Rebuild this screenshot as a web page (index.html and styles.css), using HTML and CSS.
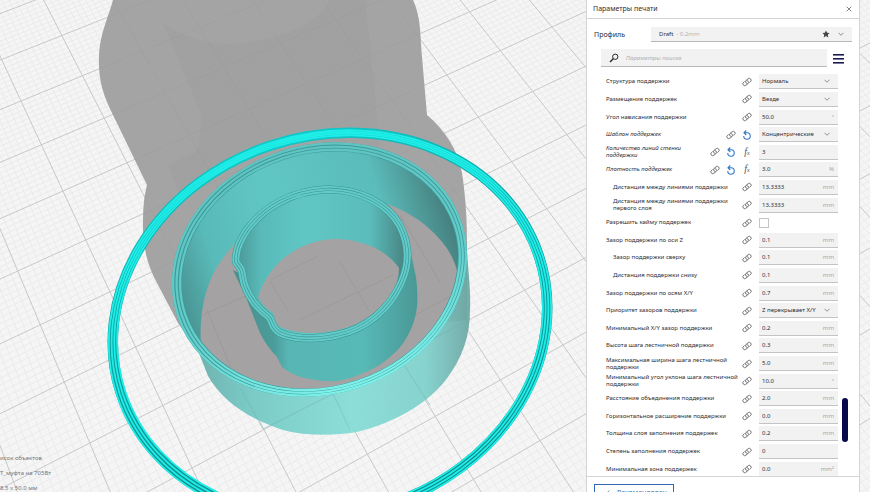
FILE: index.html
```html
<!DOCTYPE html>
<html lang="ru">
<head>
<meta charset="utf-8">
<meta name="viewport" content="width=device-width, initial-scale=1">
<title>Параметры печати</title>
<link rel="stylesheet" href="styles.css">
</head>
<body>
<svg class="sprites" aria-hidden="true">
  <symbol id="link" viewBox="0 0 20 20"><g fill="none" stroke="currentColor" stroke-width="1.6" stroke-linecap="round" transform="rotate(-38 10 10)"><path d="M8.2 12.200A3.500 3.500 0 0 1 10.500 6.300H15.800A3.700 3.700 0 0 1 15.800 13.700H14"/><path d="M11.800 7.800A3.500 3.500 0 0 1 9.500 13.700H4.200A3.700 3.700 0 0 1 4.200 6.300H6"/></g></symbol>
  <symbol id="reset" viewBox="0 0 20 20"><path d="M3.500 12A6.500 6.500 0 1 0 10 5.500H4.500M8.500 1L4 5.500L8.500 10" fill="none" stroke="currentColor" stroke-width="2.200"/></symbol>
  <symbol id="chevron" viewBox="0 0 12 8"><path d="M1 1.5L6 6.5L11 1.5" fill="none" stroke="currentColor" stroke-width="1.6"/></symbol>
</svg>

<main class="viewer">
  <svg class="scene" viewBox="0 0 870 492" preserveAspectRatio="xMinYMin slice" aria-hidden="true">
    <defs>
      <linearGradient id="wallIn" x1="0" x2="1"><stop offset="0" stop-color="#4a9695"/><stop offset=".15" stop-color="#59bbb9"/><stop offset=".4" stop-color="#60c6c4"/><stop offset=".78" stop-color="#5bbdbb"/><stop offset="1" stop-color="#46807f"/></linearGradient>
      <linearGradient id="wallOut" x1="0" x2="1"><stop offset="0" stop-color="#5f9f9d"/><stop offset=".25" stop-color="#70c6c2"/><stop offset=".6" stop-color="#84dcd6"/><stop offset=".85" stop-color="#7ed0cb"/><stop offset="1" stop-color="#6aa5a2"/></linearGradient>
      <linearGradient id="coreOut" x1="0" x2="1"><stop offset="0" stop-color="#4d8e8d"/><stop offset=".22" stop-color="#4a9c9a"/><stop offset=".3" stop-color="#58b6b3"/><stop offset=".7" stop-color="#57bab7"/><stop offset="1" stop-color="#4a9896"/></linearGradient>
      <linearGradient id="brimDark" x1="0" y1="0" x2="0" y2="1"><stop offset="0" stop-color="#10c8c8"/><stop offset=".3" stop-color="#0fa0a0"/><stop offset="1" stop-color="#128a8a"/></linearGradient>
      <linearGradient id="rimLight" x1="0" y1="0" x2="0" y2="1"><stop offset="0" stop-color="#5fc4c2"/><stop offset=".6" stop-color="#62cdca"/><stop offset="1" stop-color="#7df0ea"/></linearGradient>
      <clipPath id="bore"><ellipse cx="320" cy="270" rx="140" ry="116" transform="rotate(-18 320 270)"/></clipPath>
      <path id="coreRim" d="M236 262C235 250 240 240 247 230C264 207 292 191 325 189.500C360 188 389 205 400 226C411 248 408 268 401 283C390 308 367 329 337 335C314 340 293 339 280 333C271 328 273 322 269 317C258 309 249 297 245 286C242 277 243 274 241 269Z"/>
    </defs>
    <g id="grid-minor" class="grid-minor"></g>
    <g id="grid-major" class="grid-major"></g>

    <path fill="#9b9b9b" fill-opacity=".9" d="M113 0C108 18 100 34 99 55C98 80 103 95 113 115L147 185C143 200 143 214 143 230C144 252 148 266 157 283L178 323L197 350L300 340L467 320V246C467 220 466 200 462 173C458 150 445 130 427 115L422 57C420 32 421 18 413 0Z"/>
    <path fill="#8c8c8c" fill-opacity=".12" d="M163 23Q215 60 290 32Q325 15 330 0H365L373 75L380 150Q250 120 180 195L168 165L198 150L202 117L190 87Z"/>

    <g fill="none">
      <ellipse cx="330" cy="325" rx="220" ry="189" stroke="url(#brimDark)" stroke-width="10.500" transform="rotate(-18 330 325)"/>
      <g stroke="#1feee8" stroke-width="1.8">
        <ellipse cx="330" cy="326" rx="224" ry="192.500" transform="rotate(-18 330 326)"/>
        <ellipse cx="330" cy="325.400" rx="221.200" ry="190.200" transform="rotate(-18 330 325.400)"/>
        <ellipse cx="330" cy="324.700" rx="218.400" ry="187.900" transform="rotate(-18 330 324.700)"/>
        <ellipse cx="330" cy="324" rx="215.600" ry="185.600" transform="rotate(-18 330 324)"/>
      </g>
    </g>

    <path fill="url(#wallOut)" fill-opacity=".92" d="M173 290L197 348L208 376C222 400 246 418 283 430C306 436 334 436 357 432C396 422 425 405 445 381C463 358 470 335 470 310C471 290 468 270 467 250L320 380Z"/>
    <g fill="none" stroke="#6fb3b0" stroke-width=".8" opacity=".6"><path d="M240 388L263 429M333 394L350 430M404 365L430 405M263 429L333 394M425 343L470 319"/></g>
    <ellipse cx="319.5" cy="269.5" rx="149.8" ry="124.5" fill="#3d9a99" transform="rotate(-18 319.5 269.5)"/>
    <ellipse cx="320" cy="270" rx="140" ry="116" fill="url(#wallIn)" transform="rotate(-18 320 270)"/>
    <g clip-path="url(#bore)">
      <path fill="#a4a2a2" d="M201 345C199 318 204 288 217 267C240 228 290 200 340 198C385 196 420 215 443 243C455 258 460 275 462 300V420H201Z"/>
      <g stroke="#999797" stroke-width=".8"><path d="M203 315L250 294M400 215L440 282M207 310L232 370M410 318L462 290"/></g>
    </g>
    <g fill="none" stroke="url(#rimLight)" stroke-width="2.300">
      <ellipse cx="319.5" cy="269.5" rx="148.6" ry="123.5" transform="rotate(-18 319.5 269.5)"/>
      <ellipse cx="319.7" cy="269.7" rx="145.3" ry="120.6" transform="rotate(-18 319.7 269.7)"/>
      <ellipse cx="320" cy="270" rx="142" ry="117.7" transform="rotate(-18 320 270)"/>
    </g>

    <path fill="url(#coreOut)" d="M233 270L247 300L260 333Q267 347 277 357L282 367Q295 377 310 379Q325 382 337 381Q351 379 363 373Q379 367 390 357Q401 348 407 337Q415 323 417 307Q418 292 416 277L409 245L330 320Z"/>
    <use href="#coreRim" fill="url(#wallIn)"/>
    <path fill="#a4a2a2" d="M258 297Q262 284 270 273C285 252 310 239 337 239C366 240 388 252 399 268Q399 282 391 295C375 320 345 332 315 333Q290 333 277 325L273 313Q263 307 258 297Z"/>
    <g stroke="#9a9898" stroke-width=".8"><path d="M270 281L288 311M340 262L369 311M270 280L318 256M300 320L393 275"/></g>
    <g fill="none" stroke-linejoin="round">
      <use href="#coreRim" stroke="#3d9594" stroke-width="8"/>
      <use href="#coreRim" stroke="#62cbc8" stroke-width="7"/>
      <use href="#coreRim" stroke="#3d9594" stroke-width="3.200"/>
      <use href="#coreRim" stroke="#62cbc8" stroke-width="2"/>
    </g>
  </svg>

  <section class="object-info" aria-label="Объекты">
    <p>исок объектов</p>
    <p>T_муфта на 705Вт</p>
    <p>8.5 x 50.0 мм</p>
  </section>

  <aside class="panel">
    <header class="panel-head">
      <h1>Параметры печати</h1>
      <button class="close" type="button" aria-label="Закрыть"><svg viewBox="0 0 8 8"><path d="M1 1L7 7M7 1L1 7" stroke="currentColor" stroke-width="1.2"/></svg></button>
    </header>

    <div class="profile">
      <span class="profile-name">Профиль</span>
      <button class="profile-pick" type="button"><span>Draft</span><span class="muted">- 0.2mm</span><svg class="star" viewBox="0 0 20 20"><path fill="currentColor" d="M10 1L12.800 7L19 7.700L14.400 12L15.700 18.500L10 15.200L4.300 18.500L5.600 12L1 7.700L7.200 7Z"/></svg><svg class="chev"><use href="#chevron"/></svg></button>
    </div>

    <div class="search">
      <label class="search-box"><svg viewBox="0 0 20 20"><circle cx="12.500" cy="7.500" r="5.300" fill="none" stroke="currentColor" stroke-width="2"/><path d="M8.500 11.500L2 18" stroke="currentColor" stroke-width="3"/></svg><input type="text" placeholder="Параметры поиска" aria-label="Параметры поиска"></label>
      <button class="menu" type="button" aria-label="Меню"><span></span><span></span><span></span></button>
    </div>

    <div class="body">
      <div class="rows">
        <div class="row"><label for="s1">Структура поддержки</label><svg class="ico"><use href="#link"/></svg><div class="field"><select id="s1"><option>Нормаль</option></select><svg class="chev"><use href="#chevron"/></svg></div></div>
        <div class="row"><label for="s2">Размещение поддержек</label><svg class="ico"><use href="#link"/></svg><div class="field"><select id="s2"><option>Везде</option></select><svg class="chev"><use href="#chevron"/></svg></div></div>
        <div class="row"><label for="s3">Угол нависания поддержки</label><svg class="ico"><use href="#link"/></svg><div class="field"><input id="s3" type="text" value="50.0"><span>°</span></div></div>
        <div class="row changed"><label for="s4">Шаблон поддержек</label><svg class="ico"><use href="#link"/></svg><svg class="ico blue"><use href="#reset"/></svg><div class="field"><select id="s4"><option>Концентрические</option></select><svg class="chev"><use href="#chevron"/></svg></div></div>
        <div class="row changed"><label for="s5">Количество линий стенки поддержки</label><svg class="ico"><use href="#link"/></svg><svg class="ico blue"><use href="#reset"/></svg><span class="fx">f<small>x</small></span><div class="field"><input id="s5" type="text" value="3"></div></div>
        <div class="row changed"><label for="s6">Плотность поддержек</label><svg class="ico"><use href="#link"/></svg><svg class="ico blue"><use href="#reset"/></svg><span class="fx">f<small>x</small></span><div class="field"><input id="s6" type="text" value="3.0"><span>%</span></div></div>
        <div class="row child"><label for="s7">Дистанция между линиями поддержки</label><svg class="ico"><use href="#link"/></svg><div class="field"><input id="s7" type="text" value="13.3333"><span>mm</span></div></div>
        <div class="row child"><label for="s8">Дистанция между линиями поддержки первого слоя</label><svg class="ico"><use href="#link"/></svg><div class="field"><input id="s8" type="text" value="13.3333"><span>mm</span></div></div>
        <div class="row"><label for="s9">Разрешить кайму поддержек</label><svg class="ico"><use href="#link"/></svg><div class="check"><input id="s9" type="checkbox"></div></div>
        <div class="row"><label for="s10">Зазор поддержки по оси Z</label><svg class="ico"><use href="#link"/></svg><div class="field"><input id="s10" type="text" value="0.1"><span>mm</span></div></div>
        <div class="row child"><label for="s11">Зазор поддержки сверху</label><svg class="ico"><use href="#link"/></svg><div class="field"><input id="s11" type="text" value="0.1"><span>mm</span></div></div>
        <div class="row child"><label for="s12">Дистанция поддержки снизу</label><svg class="ico"><use href="#link"/></svg><div class="field"><input id="s12" type="text" value="0.1"><span>mm</span></div></div>
        <div class="row"><label for="s13">Зазор поддержки по осям X/Y</label><svg class="ico"><use href="#link"/></svg><div class="field"><input id="s13" type="text" value="0.7"><span>mm</span></div></div>
        <div class="row"><label for="s14">Приоритет зазоров поддержки</label><svg class="ico"><use href="#link"/></svg><div class="field"><select id="s14"><option>Z перекрывает X/Y</option></select><svg class="chev"><use href="#chevron"/></svg></div></div>
        <div class="row"><label for="s15">Минимальный X/Y зазор поддержки</label><svg class="ico"><use href="#link"/></svg><div class="field"><input id="s15" type="text" value="0.2"><span>mm</span></div></div>
        <div class="row"><label for="s16">Высота шага лестничной поддержки</label><svg class="ico"><use href="#link"/></svg><div class="field"><input id="s16" type="text" value="0.3"><span>mm</span></div></div>
        <div class="row"><label for="s17">Максимальная ширина шага лестничной поддержки</label><svg class="ico"><use href="#link"/></svg><div class="field"><input id="s17" type="text" value="5.0"><span>mm</span></div></div>
        <div class="row"><label for="s18">Минимальный угол уклона шага лестничной поддержки</label><svg class="ico"><use href="#link"/></svg><div class="field"><input id="s18" type="text" value="10.0"><span>°</span></div></div>
        <div class="row"><label for="s19">Расстояние объединения поддержки</label><svg class="ico"><use href="#link"/></svg><div class="field"><input id="s19" type="text" value="2.0"><span>mm</span></div></div>
        <div class="row"><label for="s20">Горизонтальное расширение поддержки</label><svg class="ico"><use href="#link"/></svg><div class="field"><input id="s20" type="text" value="0.0"><span>mm</span></div></div>
        <div class="row"><label for="s21">Толщина слоя заполнения поддержек</label><svg class="ico"><use href="#link"/></svg><div class="field"><input id="s21" type="text" value="0.2"><span>mm</span></div></div>
        <div class="row"><label for="s22">Степень заполнения поддержек</label><svg class="ico"><use href="#link"/></svg><div class="field"><input id="s22" type="text" value="0"></div></div>
        <div class="row"><label for="s23">Минимальная зона поддержек</label><svg class="ico"><use href="#link"/></svg><div class="field"><input id="s23" type="text" value="0.0"><span>mm²</span></div></div>
      </div>
      <div class="track"><div class="thumb"></div></div>
    </div>

    <footer class="panel-foot">
      <button type="button"><svg viewBox="0 0 8 12"><path d="M6.500 1L1.500 6L6.500 11" fill="none" stroke="currentColor" stroke-width="1.600"/></svg>Рекомендован</button>
    </footer>
  </aside>
</main>
<script src="grid.js"></script>
</body>
</html>
```
FILE: grid.js
```js
// Perspective build plate: four grid nodes with their screen positions define the projection.
const anchors = [
  [1, 3, 21, 101],
  [1, 10, 192, 468],
  [9, 6, 552, 27],
  [6, 11, 563, 345]
];

function solve(m) {
  const n = m.length;
  for (let c = 0; c < n; c++) {
    let p = c;
    for (let r = c + 1; r < n; r++) if (Math.abs(m[r][c]) > Math.abs(m[p][c])) p = r;
    [m[c], m[p]] = [m[p], m[c]];
    for (let r = 0; r < n; r++) {
      if (r === c) continue;
      const f = m[r][c] / m[c][c];
      for (let k = c; k <= n; k++) m[r][k] -= f * m[c][k];
    }
  }
  return m.map((row, i) => row[n] / row[i]);
}

const h = solve(anchors.flatMap(([i, j, x, y]) => [
  [i, j, 1, 0, 0, 0, -i * x, -j * x, x],
  [0, 0, 0, i, j, 1, -i * y, -j * y, y]
]));

function project(i, j) {
  const w = h[6] * i + h[7] * j + 1;
  return ((h[0] * i + h[1] * j + h[2]) / w).toFixed(1) + ' ' + ((h[3] * i + h[4] * j + h[5]) / w).toFixed(1);
}

let major = '';
let minor = '';
for (let s = -30; s <= 170; s++) {
  const t = s / 10;
  const d = 'M' + project(t, -3) + 'L' + project(t, 17) + 'M' + project(-3, t) + 'L' + project(17, t);
  if (s % 10 === 0) major += d; else minor += d;
}
document.getElementById('grid-major').innerHTML = '<path d="' + major + '"/>';
document.getElementById('grid-minor').innerHTML = '<path d="' + minor + '"/>';
```
FILE: styles.css
```css
* { box-sizing: border-box; }

body {
  margin: 0;
  font-family: "Noto Sans", sans-serif;
  font-size: 6px;
  line-height: 8px;
  color: #2e2e34;
}

button, input, select {
  margin: 0;
  padding: 0;
  border: 0;
  border-radius: 0;
  background: none;
  color: inherit;
  font: inherit;
  appearance: none;
}

h1, p { margin: 0; }
svg { display: block; }

.sprites {
  position: absolute;
  width: 0;
  height: 0;
}

.viewer {
  position: relative;
  display: flex;
  justify-content: flex-end;
  height: 100vh;
  padding-right: 10px;
  overflow: hidden;
  background: #f5f5f5;
}

.scene {
  position: absolute;
  inset: 0;
  width: 100%;
  height: 100%;
}

.grid-minor { fill: none; stroke: #ebebeb; stroke-width: 1; }
.grid-major { fill: none; stroke: #c8c8c8; stroke-width: 1; }

.object-info {
  position: absolute;
  left: 0;
  bottom: 0;
  display: grid;
  gap: 8px;
  line-height: 7px;
  color: #77777b;
}

.panel {
  position: relative;
  display: flex;
  flex-direction: column;
  width: 274px;
  max-width: 100%;
  background: #fff;
  border: solid #d4d4d4;
  border-width: 0 1px;
}

.panel-head {
  display: flex;
  align-items: center;
  justify-content: space-between;
  height: 19px;
  padding: 0 7px 0 6px;
  border-bottom: 1px solid #d4d4d4;
}

.panel-head h1 { font-size: 7px; font-weight: 400; }
.close { color: #77777b; }
.close svg { width: 6px; height: 6px; }

.profile {
  display: flex;
  align-items: center;
  margin-top: 8px;
  padding: 0 7px;
}

.profile-name { flex: 1; font-size: 7px; }

.profile-pick {
  display: flex;
  align-items: center;
  gap: 3px;
  width: 201px;
  height: 15px;
  padding: 0 8px;
  background: #f2f2f2;
  border-bottom: 1px solid #b8b8b8;
}

.muted { color: #b4b4b4; }
.star { width: 8px; height: 8px; margin-left: auto; color: #44444a; }
.chev { width: 6px; height: 4px; color: #77777b; flex: none; }
.profile-pick .chev { margin-left: 5px; }

.search {
  display: flex;
  align-items: center;
  gap: 6px;
  margin-top: 7px;
  padding: 0 15px 0 14px;
}

.search-box {
  display: flex;
  flex: 1;
  align-items: center;
  gap: 7px;
  height: 18px;
  padding: 0 8px;
  background: #f2f2f2;
  border-bottom: 1px solid #b8b8b8;
}

.search-box svg { width: 10px; height: 10px; color: #26262c; }
.search-box input { flex: 1; min-width: 0; font-style: italic; }
.search-box input::placeholder { color: #b0b0b0; opacity: 1; }

.menu { display: grid; gap: 3px; width: 11px; }
.menu span { height: 1px; background: #1a1a4c; box-shadow: 0 1px #77779a; }

.body {
  position: relative;
  flex: 1;
  min-height: 0;
  margin-top: 6px;
  padding: 0 21px 0 19px;
  overflow: hidden;
  border-bottom: 1px solid #d4d4d4;
}

.rows {
  display: grid;
  grid-auto-rows: 1fr;
  height: calc(100% + 2px);
}

.row {
  display: flex;
  align-items: center;
  gap: 6px;
  min-height: 0;
}

.row label { flex: 1; margin-right: -6px; line-height: 7px; }
.changed label { font-style: italic; }
.child label { padding-left: 7px; }
.ico { width: 10px; height: 10px; flex: none; color: #5c5c62; }
.blue { color: #2f78c8; }

.fx {
  width: 10px;
  font: italic 10px/10px "Liberation Serif", serif;
  text-align: center;
  color: #55555b;
}
.fx small { font-size: 6px; }

.field, .check { width: 79px; margin-left: 1px; flex: none; }

.field {
  display: flex;
  align-items: center;
  height: 15px;
  padding: 0 4px 0 3px;
  background: #f2f2f2;
  border-bottom: 1px solid #c4c4c4;
}

.field input, .field select { flex: 1; min-width: 0; height: 14px; }
.field span { color: #a4a4a8; }
.field .chev { margin-right: 4px; }

.check input {
  display: block;
  width: 10px;
  height: 10px;
  border: 1px solid #c4c4c4;
  background: #fff;
}

.track {
  position: absolute;
  top: 0;
  right: 11px;
  bottom: 0;
  width: 6px;
  padding-bottom: 34px;
  display: flex;
  align-items: flex-end;
}

.thumb {
  width: 6px;
  height: 44px;
  border-radius: 3px;
  background: #08084c;
}

.panel-foot {
  height: 15px;
  padding: 7px 7px 0;
  overflow: hidden;
}

.panel-foot button {
  display: flex;
  align-items: center;
  gap: 7px;
  height: 17px;
  padding: 0 6px 0 11px;
  border: 1px solid #2f68b0;
  color: #2f68b0;
  font-size: 7px;
}

.panel-foot svg { width: 4px; height: 6px; }
```
